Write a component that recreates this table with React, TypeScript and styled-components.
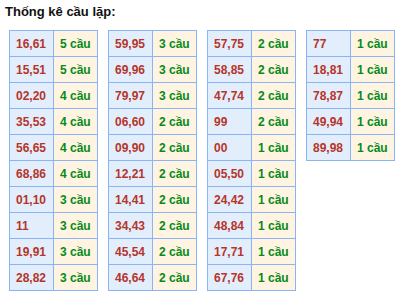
import React from "react";
import styled, { createGlobalStyle } from "styled-components";

const Global = createGlobalStyle`
  html, body { margin: 0; padding: 0; background: #ffffff; }
  body { font-family: "Liberation Sans", Arial, sans-serif; }
`;

const Page = styled.div`
  padding: 4px 0 0 5px;
`;

const Title = styled.h3`
  margin: 0 0 10px 0;
  font-size: 13px;
  line-height: 16px;
  font-weight: bold;
  color: #111111;
`;

const Tables = styled.div`
  display: flex;
  align-items: flex-start;
  gap: 10px;
  padding-left: 4px;
`;

const Table = styled.div`
  display: grid;
  grid-template-columns: 43px 43px;
  gap: 1px;
  background: #8ab4f8;
  border: 1px solid #8ab4f8;
`;

const Cell = styled.div<{ $kind: "num" | "count" }>`
  height: 25px;
  display: flex;
  align-items: center;
  padding-left: 6px;
  font-size: 12px;
  font-weight: bold;
  background: ${(p) => (p.$kind === "num" ? "#e3eefd" : "#fff4e2")};
  color: ${(p) => (p.$kind === "num" ? "#b5352a" : "#068a1a")};
  white-space: nowrap;
`;

const data: [string, number][][] = [
  [
    ["16,61", 5], ["15,51", 5], ["02,20", 4], ["35,53", 4], ["56,65", 4],
    ["68,86", 4], ["01,10", 3], ["11", 3], ["19,91", 3], ["28,82", 3],
  ],
  [
    ["59,95", 3], ["69,96", 3], ["79,97", 3], ["06,60", 2], ["09,90", 2],
    ["12,21", 2], ["14,41", 2], ["34,43", 2], ["45,54", 2], ["46,64", 2],
  ],
  [
    ["57,75", 2], ["58,85", 2], ["47,74", 2], ["99", 2], ["00", 1],
    ["05,50", 1], ["24,42", 1], ["48,84", 1], ["17,71", 1], ["67,76", 1],
  ],
  [["77", 1], ["18,81", 1], ["78,87", 1], ["49,94", 1], ["89,98", 1]],
];

export default function App() {
  return (
    <Page>
      <Global />
      <Title>Thống kê cầu lặp:</Title>
      <Tables>
        {data.map((tbl, i) => (
          <Table key={i}>
            {tbl.map(([num, c], j) => (
              <React.Fragment key={j}>
                <Cell $kind="num">{num}</Cell>
                <Cell $kind="count">{c} cầu</Cell>
              </React.Fragment>
            ))}
          </Table>
        ))}
      </Tables>
    </Page>
  );
}
